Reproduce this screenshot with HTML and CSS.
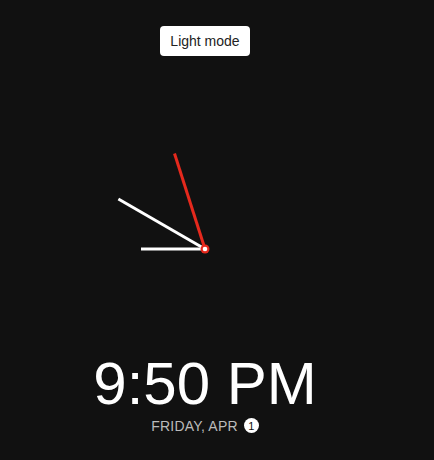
FILE: index.html
```html
<!DOCTYPE html>
<html>
<head>
<meta charset="utf-8">
<link rel="stylesheet" href="styles.css">
</head>
<body>
<main class="app">
  <button class="mode-toggle">Light mode</button>
  <svg class="clock" width="200" height="200" viewBox="-100 -100 200 200">
    <line class="hand hour" x1="0" y1="0" x2="-64" y2="0"/>
    <line class="hand minute" x1="0" y1="0" x2="-86.6" y2="-50"/>
    <line class="hand second" x1="0" y1="0" x2="-30.5" y2="-95.5"/>
    <circle class="pin" cx="0" cy="0" r="4.5"/>
    <circle class="pin-core" cx="0" cy="0" r="2.3"/>
  </svg>
  <div class="time">9:50 PM</div>
  <div class="date">FRIDAY, APR <span class="day">1</span></div>
</main>
</body>
</html>
```
FILE: styles.css
```css
html, body {
  margin: 0;
  padding: 0;
  background: #111111;
  height: 100%;
}
body {
  font-family: "Liberation Sans", Arial, sans-serif;
}
.app {
  width: 410px;
  display: flex;
  flex-direction: column;
  align-items: center;
  padding-top: 26px;
}
.mode-toggle {
  font-family: "Liberation Sans", Arial, sans-serif;
  font-size: 14px;
  color: #222;
  background: #fff;
  border: none;
  border-radius: 4px;
  height: 30px;
  width: 90px;
  padding: 0;
}
.clock {
  display: block;
  margin-top: 92.5px;
  overflow: visible;
}
.hand {
  stroke-width: 3;
  stroke-linecap: butt;
}
.hour, .minute {
  stroke: #ffffff;
}
.second {
  stroke: #e5291d;
}
.pin {
  fill: #e5291d;
}
.pin-core {
  fill: #ffffff;
}
.time {
  color: #ffffff;
  font-size: 60px;
  line-height: 69px;
}
.date {
  color: #bbbbbb;
  font-size: 14px;
  letter-spacing: 0.2px;
  line-height: 16px;
  display: flex;
  align-items: center;
  gap: 6px;
}
.day {
  display: inline-flex;
  align-items: center;
  justify-content: center;
  width: 15px;
  height: 15px;
  border-radius: 50%;
  background: #ffffff;
  color: #111111;
  font-size: 11px;
  letter-spacing: 0;
}
```
